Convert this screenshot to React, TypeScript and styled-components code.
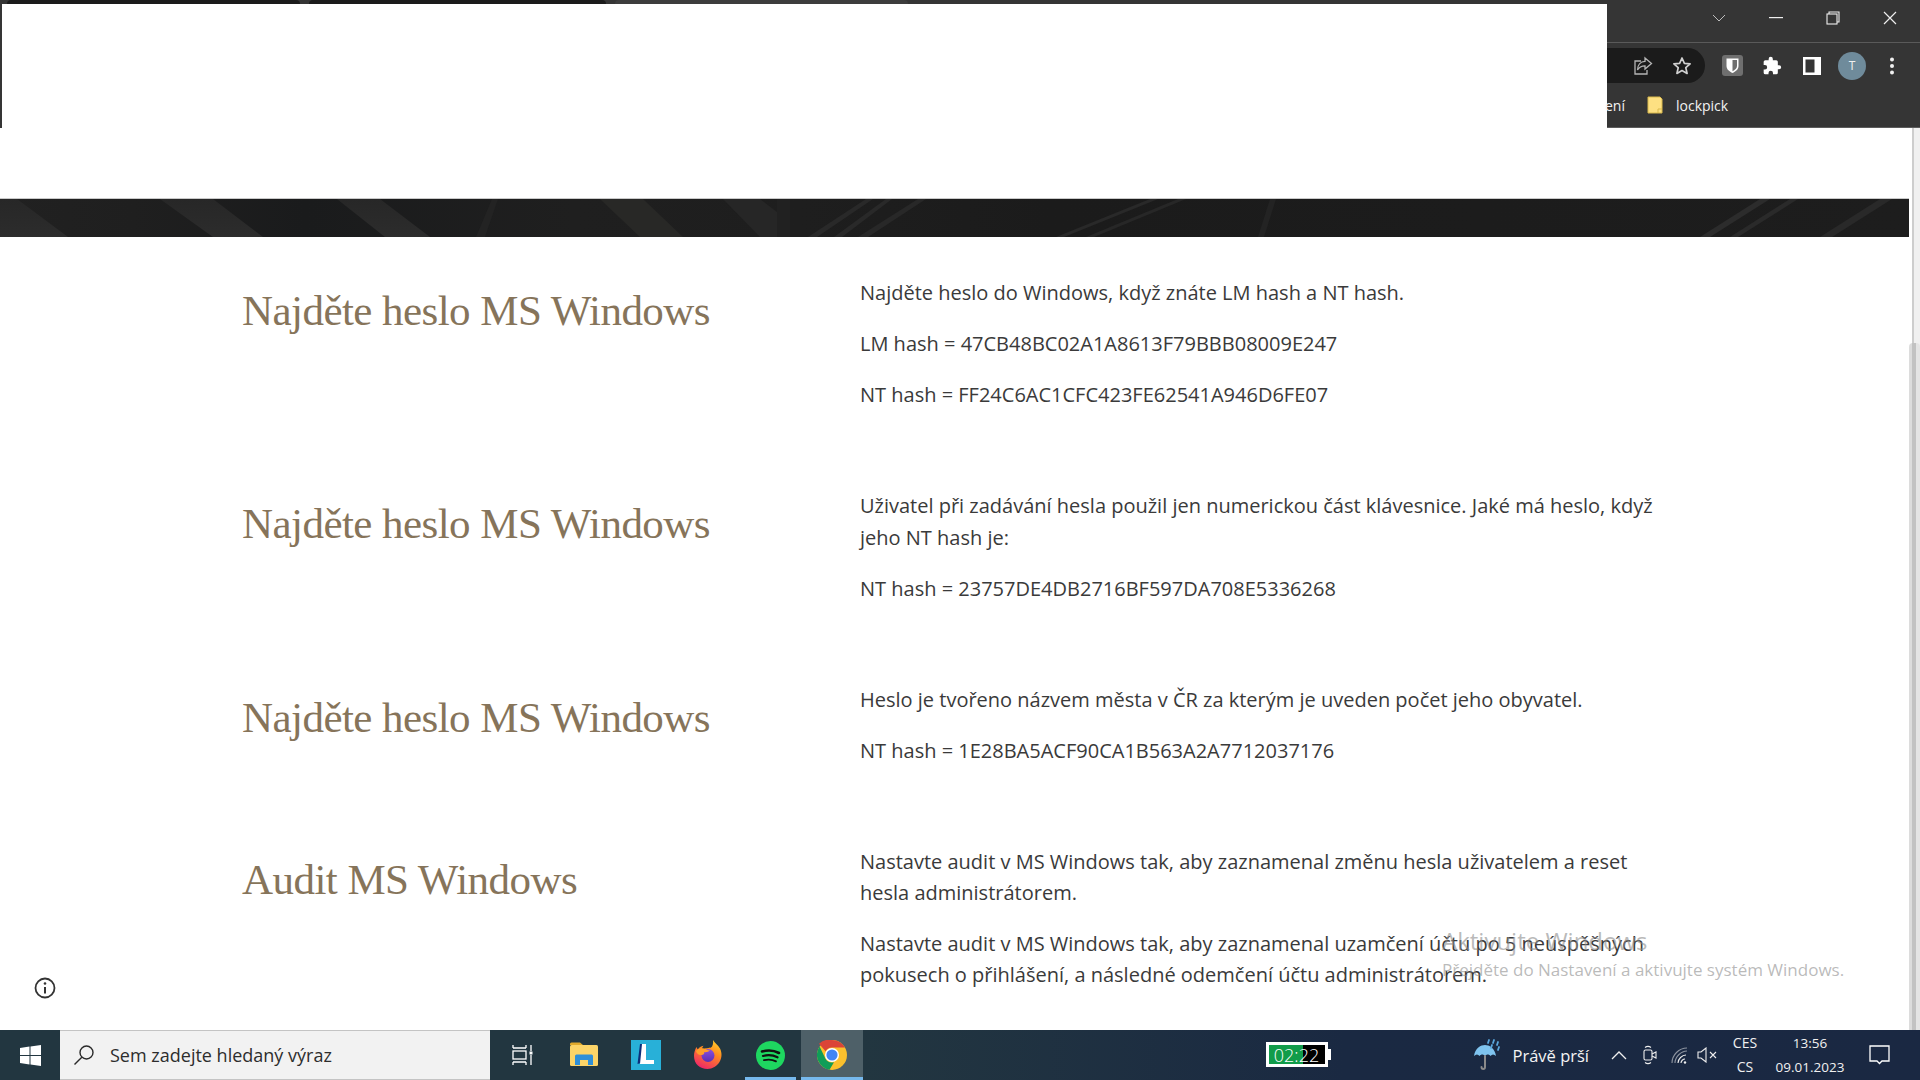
import React from 'react';
import styled, { createGlobalStyle } from 'styled-components';

const Global = createGlobalStyle`
  html, body { margin: 0; padding: 0; width: 1920px; height: 1080px; overflow: hidden; background: #fff; }
  #root { width: 1920px; height: 1080px; }
  * { box-sizing: border-box; }
`;

const Screen = styled.div`
  position: relative;
  width: 1920px; height: 1080px;
  display: flex; flex-direction: column;
  overflow: hidden;
  font-family: "Open Sans", sans-serif;
`;

/* ---------- browser frame ---------- */
const BrowserFrame = styled.header`
  height: 128px; flex: none;
  background: #353535;
  display: flex; flex-direction: column;
`;
const TabEdge = styled.div`
  height: 4px; flex: none; display: flex; padding-left: 7px; gap: 6px;
`;
const TabSliver = styled.div<{ $w: number; $active?: boolean }>`
  width: ${p => p.$w}px;
  background: ${p => (p.$active ? '#3d3d3d' : '#1b1b1b')};
  border-radius: 4px 4px 0 0;
  margin-right: 3px;
`;
const FrameBody = styled.div`
  flex: 1; display: flex; padding-left: 2px; min-height: 0;
`;
const Redaction = styled.div`
  width: 1605px; background: #fff; flex: none;
`;
const ChromeSide = styled.div`
  flex: 1; display: flex; flex-direction: column; min-width: 0;
  border-bottom: 1px solid #5c5c5c;
`;
const WindowRow = styled.div`
  height: 39px; flex: none; display: flex; align-items: center;
  border-bottom: 1px solid #5a5a5a;
  padding: 0 0 11px 102px; gap: 37px;
  color: #e8e8e8;
`;
const WinButton = styled.span`
  width: 20px; height: 20px; display: flex; align-items: center; justify-content: center;
`;
const ToolRow = styled.div`
  height: 45px; flex: none; display: flex; align-items: center;
`;
const Omnibox = styled.div`
  width: 98px; height: 35px; background: #1b1b1b; border-radius: 0 18px 18px 0;
  display: flex; align-items: center; padding-left: 26px; gap: 19px; flex: none;
`;
const ToolIcons = styled.div`
  display: flex; align-items: center; margin-left: 7px;
`;
const ToolSlot = styled.span`
  width: 40px; height: 32px; display: flex; align-items: center; justify-content: center;
`;
const Avatar = styled.span`
  width: 28px; height: 28px; border-radius: 50%; background: #6f8b9b; color: #f0f0f0;
  font-size: 12px; display: flex; align-items: center; justify-content: center;
`;
const BookmarkRow = styled.div`
  flex: 1; display: flex; align-items: center; color: #f2f2f2; font-size: 14px; padding-bottom: 5px;
`;
const BookmarkCut = styled.span` width: 40px; flex: none; margin-left: -2px; `;
const Bookmark = styled.span`
  display: flex; align-items: center; gap: 13px; margin-left: 2px;
`;

/* ---------- page ---------- */
const Viewport = styled.div`
  flex: 1; display: flex; min-height: 0; position: relative;
`;
const Page = styled.main`
  flex: 1; min-width: 0; padding-top: 70px; background: #fff;
`;
const Banner = styled.div`
  height: 39px; background: #1e1e1e; border-top: 1px solid #c9c9c9; overflow: hidden;
  svg { display: block; }
`;
const Content = styled.div`
  padding: 40px 0 0 242px; display: flex; flex-direction: column; gap: 79.7px;
`;
const Section = styled.section`
  display: grid; grid-template-columns: 618px 802px;
`;
const Heading = styled.h2`
  margin: 0; font-family: "Liberation Serif", serif; font-weight: 400;
  font-size: 43px; line-height: 68px; color: #86745a; letter-spacing: -0.55px;
`;
const Body = styled.div`
  display: flex; flex-direction: column; gap: 20px;
`;
const Para = styled.p`
  margin: 0; font-size: 20px; line-height: 31.2px; color: #3a3a3a;
`;
const Scrollbar = styled.div`
  width: 11px; flex: none; background: linear-gradient(90deg, #fff 0 3px, #cdcdcd 3px 5px, #f0f0f0 5px);
  padding-top: 215px;
`;
const ScrollThumb = styled.div`
  height: 100%; border-radius: 4px 4px 0 0;
  background: linear-gradient(90deg, #dcdcdc 0 3px, #c2c2c2 3px 7px, #e4e4e4 7px);
`;
const InfoButton = styled.span`
  position: absolute; left: 34px; top: 849px; width: 22px; height: 22px; display: flex;
`;
const Watermark = styled.div`
  position: absolute; left: 1442px; top: 795px; color: rgba(140,140,140,.6);
  pointer-events: none;
`;
const WatermarkTitle = styled.div` font-size: 24px; line-height: 35px; `;
const WatermarkSub = styled.div` font-size: 17px; line-height: 24px; `;

/* ---------- taskbar ---------- */
const Taskbar = styled.footer`
  height: 50px; flex: none; display: flex; align-items: stretch;
  background: linear-gradient(90deg, #223640 0%, #223640 45%, #1a2942 70%, #1a2842 100%);
`;
const StartButton = styled.div`
  width: 60px; display: flex; align-items: center; justify-content: center; flex: none;
`;
const SearchBox = styled.div`
  width: 430px; flex: none; background: #f2f2f2; border: 1px solid #c4c4c4; border-width: 1px 0 1px 0;
  display: flex; align-items: center; padding-left: 13px; gap: 15px; font-size: 18px; color: #2d2d2d;
`;
const TaskList = styled.div`
  display: flex; padding-left: 1px; flex: none;
`;
const TaskIcon = styled.div<{ $open?: boolean; $active?: boolean }>`
  position: relative; width: 62px; flex: none; display: flex; align-items: center; justify-content: center;
  background: ${p => (p.$active ? '#4e6068' : 'transparent')};
  &::after {
    content: ""; position: absolute; bottom: 0; height: 3px;
    left: ${p => (p.$active ? 0 : 6)}px; right: ${p => (p.$active ? 0 : 5)}px;
    background: ${p => (p.$open ? '#76b9ed' : 'transparent')};
  }
`;
const Spacer = styled.div` flex: 1; `;
const Timer = styled.div`
  position: relative; width: 62px; height: 25px; border: 3px solid #fff; flex: none; margin: 12px 0 0 0;
  background: linear-gradient(90deg, #119c4a 0 60%, #000 60% 100%);
  color: #fff; font-size: 18px; display: flex; align-items: center; justify-content: center;
  line-height: 1; font-weight: 300;
  &::after { content: ""; position: absolute; right: -6px; top: 4px; width: 3px; height: 11px; background: #fff; }
`;
const Weather = styled.div`
  display: flex; align-items: center; gap: 10px; margin-left: 145px; color: #f4f4f4; font-size: 16.5px; flex: none;
`;
const Tray = styled.div`
  display: flex; align-items: center; margin-left: 22px; flex: none;
`;
const TraySlot = styled.span<{ $gap?: number }>`
  display: flex; margin-right: ${p => p.$gap ?? 0}px;
`;
const LangStack = styled.div`
  display: flex; flex-direction: column; align-items: center; justify-content: center; color: #f0f0f0; font-size: 14px; line-height: 24px; margin-left: 8px; width: 40px; flex: none;
`;
const ClockStack = styled(LangStack)`
  margin-left: 7px; width: 76px; font-size: 13.5px;
`;
const NotifySlot = styled.div`
  width: 72px; display: flex; align-items: center; padding-left: 21px; flex: none;
`;

const sections = [
  { title: 'Najděte heslo MS Windows', lines: ['Najděte heslo do Windows, když znáte LM hash a NT hash.', 'LM hash = 47CB48BC02A1A8613F79BBB08009E247', 'NT hash = FF24C6AC1CFC423FE62541A946D6FE07'] },
  { title: 'Najděte heslo MS Windows', lines: ['Uživatel při zadávání hesla použil jen numerickou část klávesnice. Jaké má heslo, když jeho NT hash je:', 'NT hash = 23757DE4DB2716BF597DA708E5336268'] },
  { title: 'Najděte heslo MS Windows', lines: ['Heslo je tvořeno názvem města v ČR za kterým je uveden počet jeho obyvatel.', 'NT hash = 1E28BA5ACF90CA1B563A2A7712037176'] },
  { title: 'Audit MS Windows', lines: ['Nastavte audit v MS Windows tak, aby zaznamenal změnu hesla uživatelem a reset hesla administrátorem.', 'Nastavte audit v MS Windows tak, aby zaznamenal uzamčení účtu po 5 neúspěšných pokusech o přihlášení, a následné odemčení účtu administrátorem.'] },
];

const BannerArt = () => (
  <svg width="1909" height="38" viewBox="0 0 1909 38">
    <defs>
      <linearGradient id="bandA" x1="0" x2="0" y1="0" y2="1"><stop offset="0" stopColor="#272727" /><stop offset="1" stopColor="#2c2c2c" /></linearGradient>
      <linearGradient id="base" x1="0" x2="1" y1="0" y2="0">
        <stop offset="0" stopColor="#212121" />
        <stop offset=".07" stopColor="#1f1f1f" />
        <stop offset=".16" stopColor="#1a1b1c" />
        <stop offset=".3" stopColor="#1f1f1f" />
        <stop offset=".42" stopColor="#1e1e1e" />
        <stop offset=".55" stopColor="#1b1b1b" />
        <stop offset="1" stopColor="#1d1d1d" />
      </linearGradient>
    </defs>
    <rect width="1909" height="38" fill="url(#base)" />
    <polygon points="0,0 17,0 68,38 0,38" fill="url(#bandA)" />
    <polygon points="160,0 213,0 263,38 213,38" fill="url(#bandA)" />
    <polygon points="337,0 380,0 430,38 385,38" fill="url(#bandA)" />
    <polygon points="492,0 498,0 485,38 476,38" fill="#232323" />
    <polygon points="600,0 643,0 683,38 640,38" fill="#282826" />
    <polygon points="723,0 760,0 777,13 777,38 760,38" fill="#262626" />
    <polygon points="777,0 790,0 790,38 777,38" fill="#212121" />
    <polygon points="866,0 873,0 817,38 808,38" fill="#292929" />
    <polygon points="886,0 892,0 842,38 834,38" fill="#292929" />
    <polygon points="918,0 926,0 868,38 858,38" fill="#282828" />
    <polygon points="1270,0 1276,0 1264,38 1258,38" fill="#232323" />
    <polygon points="1150,0 1158,0 1064,38 1056,38" fill="#292929" />
    <polygon points="1178,0 1186,0 1094,38 1086,38" fill="#272727" />
    <polygon points="1700,38 1760,0 1770,0 1710,38" fill="#2c2c2c" />
    <polygon points="1730,38 1790,0 1798,0 1738,38" fill="#2a2a2a" />
    <polygon points="1820,38 1880,0 1892,0 1832,38" fill="#292929" />
  </svg>
);

const ShareIcon = () => (
  <svg width="20" height="20" viewBox="0 0 20 20" fill="none" stroke="#b5b5b5" strokeWidth="1.3"><path d="M8 5H2v13h12v-4" /><path d="M12 2l6.500 5.500L12 13V9.800C8.500 9.800 6 11 4.500 14c0-5 3-8.500 7.500-8.700V2z" /></svg>
);
const StarIcon = () => (
  <svg width="20" height="20" viewBox="0 0 20 20" fill="none" stroke="#d0d0d0" strokeWidth="1.7" strokeLinejoin="round"><path d="M10 2l2.400 5.300 5.700.6-4.300 3.800 1.300 5.700L10 14.500 4.900 17.400l1.300-5.700L1.900 7.900l5.700-.6z" /></svg>
);
const ShieldIcon = () => (
  <svg width="21" height="21" viewBox="0 0 21 21"><rect width="21" height="21" rx="3" fill="#6f6f6f" /><path d="M4.500 3.500h12v7.500c0 3.500-3 5.600-6 7-3-1.400-6-3.500-6-7z" fill="#fff" /><path d="M10.500 5h4.500v6c0 2.400-2.200 4-4.500 5.200z" fill="#6f6f6f" /></svg>
);
const PuzzleIcon = () => (
  <svg width="20" height="20" viewBox="0 0 24 24" fill="#fff"><path d="M20.500 11H19V7a2 2 0 0 0-2-2h-4V3.500a2.500 2.500 0 0 0-5 0V5H4a2 2 0 0 0-2 2v3.800h1.500a2.700 2.700 0 0 1 0 5.400H2V20a2 2 0 0 0 2 2h3.800v-1.500a2.700 2.700 0 0 1 5.400 0V22H17a2 2 0 0 0 2-2v-4h1.500a2.500 2.500 0 0 0 0-5z" /></svg>
);
const PanelIcon = () => (
  <svg width="18" height="18" viewBox="0 0 18 18"><rect width="18" height="18" fill="#fff" /><rect x="2.500" y="2.500" width="9" height="13" fill="#353535" /></svg>
);
const DotsIcon = () => (
  <svg width="6" height="18" viewBox="0 0 6 18" fill="#f0f0f0"><circle cx="3" cy="2.500" r="2" /><circle cx="3" cy="9" r="2" /><circle cx="3" cy="15.500" r="2" /></svg>
);
const WindowsLogo = () => (
  <svg width="21" height="21" viewBox="0 0 21 21" fill="#fff"><path d="M0 3l9.500-1.400V10H0z" /><path d="M10.500 1.400L21 0v10H10.500z" /><path d="M0 11h9.500v8.400L0 18z" /><path d="M10.500 11H21v10l-10.500-1.500z" /></svg>
);
const SearchGlass = () => (
  <svg width="22" height="22" viewBox="0 0 22 22" fill="none" stroke="#2a2a2a" strokeWidth="1.4"><circle cx="13.500" cy="8.500" r="6.500" /><path d="M8.800 13.200L1.500 20.500" /></svg>
);
const TaskView = () => (
  <svg width="21" height="20" viewBox="0 0 21 20" fill="none" stroke="#fff" strokeWidth="1.3"><path d="M1 3h13M1 0v3M14 0v3" /><rect x="1" y="6" width="13" height="8" /><path d="M1 17h13M1 17v3M14 17v3" /><path d="M19 0v6M19 10v10" /><rect x="17.500" y="6.500" width="3" height="3" fill="#fff" stroke="none" /></svg>
);
const FolderIcon = () => (
  <svg width="28" height="26" viewBox="0 0 28 26"><path d="M0 2a1.500 1.500 0 0 1 1.500-1.500H10L13 3h-13z" fill="#e0a92c" /><rect y="3" width="28" height="21" rx="1.500" fill="#fcd468" /><path d="M5 23V14a1.500 1.500 0 0 1 1.500-1.500h15A1.500 1.500 0 0 1 23 14v9h-5v-5h-8v5z" fill="#2f8fd8" /></svg>
);
const LLogo = () => (
  <svg width="30" height="30" viewBox="0 0 30 30"><rect width="30" height="30" fill="#28b0d8" /><path d="M9 4h4.500L10 23l-3.500 1z" fill="#0c2f7a" /><path d="M11 4h4v16h8v4H9z" fill="#fff" /></svg>
);
const FirefoxIcon = () => (
  <svg width="30" height="30" viewBox="0 0 30 30">
    <defs>
      <linearGradient id="ff" x1="0.8" x2="0.3" y1="0" y2="1"><stop offset="0" stopColor="#ffd02a" /><stop offset=".4" stopColor="#ff8a1f" /><stop offset="1" stopColor="#f0246a" /></linearGradient>
      <linearGradient id="fp" x1="0.5" x2="0.5" y1="0" y2="1"><stop offset="0" stopColor="#8a4fe0" /><stop offset="1" stopColor="#5b2fb4" /></linearGradient>
    </defs>
    <path d="M20 0c1.500 3 5 5 7 8.500 2 4 2.200 9-.5 13.500-2.500 4-7 7-12 7C7 29 1 24 1 16c0-3.500 1-6.500 2.500-9C4 8 4.300 9 5 9.500 6 7.500 8 6 10.500 5.800 9 7.500 9 8.500 9.500 9.500c2-1.500 7-1.500 8.500-2C19.500 6.500 20.500 3.500 20 0z" fill="url(#ff)" />
    <circle cx="15" cy="15.500" r="6.500" fill="url(#fp)" />
    <path d="M3 11c2-2.500 5-3 8-2.500 2.500.5 3.500 2 6 2-2 1.500-4 2-6 1.500 1 1.500-.5 3-3 3C5 15 3.500 13 3 11z" fill="#ff9d2a" />
  </svg>
);
const SpotifyIcon = () => (
  <svg width="29" height="29" viewBox="0 0 29 29" fill="none"><circle cx="14.500" cy="14.500" r="14.500" fill="#1ed760" /><path d="M6 10.500c6-1.700 12-1.200 17 1.500" stroke="#111" strokeWidth="2.600" strokeLinecap="round" /><path d="M7 15c5-1.400 10-1 14.500 1.300" stroke="#111" strokeWidth="2.200" strokeLinecap="round" /><path d="M8 19.200c4.500-1 8.500-.7 12 1.200" stroke="#111" strokeWidth="1.800" strokeLinecap="round" /></svg>
);
const ChromeIcon = () => (
  <svg width="30" height="30" viewBox="0 0 30 30">
    <circle cx="15" cy="15" r="15" fill="#fbc02d" />
    <path d="M15 0a15 15 0 0 1 13 7.500H15a7.500 7.500 0 0 0-6.500 3.800L2 3.800A15 15 0 0 1 15 0z" fill="#db4437" />
    <path d="M2.600 6.500L8.500 18.800A7.500 7.500 0 0 0 17 22.200L12.500 29.800A15 15 0 0 1 2.600 6.500z" fill="#0f9d58" />
    <circle cx="15" cy="15" r="7" fill="#fff" />
    <circle cx="15" cy="15" r="5.600" fill="#4285f4" />
  </svg>
);
const Umbrella = () => (
  <svg width="30" height="32" viewBox="0 0 30 32">
    <path d="M1 17C2 9 8 6 12 6s10 3 11 11c-2-2-4-2-5.500 0-1.500-2-4-2-5.500 0-1.500-2-4-2-5.500 0C5 15 3 15 1 17z" fill="#7fc4ef" />
    <path d="M12 17v11c0 2.500-3.500 2.500-3.500 0" fill="none" stroke="#8a8a8a" strokeWidth="2" strokeLinecap="round" />
    <path d="M16 1l-1 3M21 1l-1 3M25 3l-1 3M19 6l-1 3M26 8l-1 3" stroke="#5aa6dc" strokeWidth="1.800" strokeLinecap="round" />
  </svg>
);
const ChevronUp = () => (
  <svg width="16" height="10" viewBox="0 0 16 10" fill="none" stroke="#f0f0f0" strokeWidth="1.300"><path d="M1 9l7-7 7 7" /></svg>
);
const MeetIcon = () => (
  <svg width="14" height="20" viewBox="0 0 14 20" fill="none" stroke="#eee" strokeWidth="1.100"><rect x="1" y="5" width="8" height="10" rx="1.500" /><path d="M9 9l4-2v6l-4-2" /><path d="M2 2.500c2-1.500 4-1.500 6 0M2 17.500c2 1.500 4 1.500 6 0" /></svg>
);
const WifiIcon = () => (
  <svg width="17" height="17" viewBox="0 0 17 17" fill="none" stroke="#eee" strokeWidth="1.100"><path d="M1 16C1 8 8 1 16 1M4 16C4 10 10 4 16 4" opacity=".55" /><path d="M7 16c0-4 4-8 8-8M10 16c0-2 2-4 4-4" /><circle cx="14" cy="15.500" r="1.200" fill="#eee" stroke="none" /></svg>
);
const MuteIcon = () => (
  <svg width="20" height="16" viewBox="0 0 20 16" fill="none" stroke="#eee" strokeWidth="1.100"><path d="M1 5h3l5-4v14l-5-4H1z" /><path d="M13 5l6 6M19 5l-6 6" /></svg>
);
const NotifyIcon = () => (
  <svg width="21" height="20" viewBox="0 0 21 20" fill="none" stroke="#fff" strokeWidth="1.300"><path d="M1 1h19v15h-7l-2.500 2.500L8 16H1z" /></svg>
);
const InfoIcon = () => (
  <svg width="22" height="22" viewBox="0 0 22 22" fill="none" stroke="#333" strokeWidth="1.800"><circle cx="11" cy="11" r="9.500" /><path d="M11 10v6.500" strokeWidth="2" /><circle cx="11" cy="6.500" r="1.300" fill="#333" stroke="none" /></svg>
);
const BookmarkFolder = () => (
  <svg width="16" height="18" viewBox="0 0 16 18"><path d="M1 1h12l2 2v14H1z" fill="#fde082" stroke="#d9b94c" /><path d="M11 17v-4h4" fill="none" stroke="#d9b94c" /></svg>
);

export default function App() {
  return (
    <Screen>
      <Global />
      <BrowserFrame>
        <TabEdge>
          <TabSliver $w={293} />
          <TabSliver $w={297} />
          <TabSliver $w={293} $active />
        </TabEdge>
        <FrameBody>
          <Redaction />
          <ChromeSide>
            <WindowRow>
              <WinButton>
                <svg width="14" height="8" viewBox="0 0 14 8" fill="none" stroke="#bdbdbd" strokeWidth="1"><path d="M1 1l6 6 6-6" /></svg>
              </WinButton>
              <WinButton>
                <svg width="14" height="2" viewBox="0 0 14 2"><rect width="14" height="1.200" fill="#eee" /></svg>
              </WinButton>
              <WinButton>
                <svg width="14" height="14" viewBox="0 0 14 14" fill="none" stroke="#eee" strokeWidth="1.100"><rect x="1" y="3" width="10" height="10" /><path d="M3 3V1h10v10h-2" /></svg>
              </WinButton>
              <WinButton>
                <svg width="14" height="14" viewBox="0 0 14 14" fill="none" stroke="#eee" strokeWidth="1.200"><path d="M1 1l12 12M13 1L1 13" /></svg>
              </WinButton>
            </WindowRow>
            <ToolRow>
              <Omnibox>
                <ShareIcon />
                <StarIcon />
              </Omnibox>
              <ToolIcons>
                <ToolSlot><ShieldIcon /></ToolSlot>
                <ToolSlot><PuzzleIcon /></ToolSlot>
                <ToolSlot><PanelIcon /></ToolSlot>
                <ToolSlot><Avatar>T</Avatar></ToolSlot>
                <ToolSlot><DotsIcon /></ToolSlot>
              </ToolIcons>
            </ToolRow>
            <BookmarkRow>
              <BookmarkCut>ení</BookmarkCut>
              <Bookmark><BookmarkFolder />lockpick</Bookmark>
            </BookmarkRow>
          </ChromeSide>
        </FrameBody>
      </BrowserFrame>
      <Viewport>
        <Page>
          <Banner><BannerArt /></Banner>
          <Content>
            {sections.map((s, i) => (
              <Section key={i}>
                <Heading>{s.title}</Heading>
                <Body>
                  {s.lines.map((l, j) => <Para key={j}>{l}</Para>)}
                </Body>
              </Section>
            ))}
          </Content>
        </Page>
        <Scrollbar><ScrollThumb /></Scrollbar>
        <InfoButton><InfoIcon /></InfoButton>
        <Watermark>
          <WatermarkTitle>Aktivujte Windows</WatermarkTitle>
          <WatermarkSub>Přejděte do Nastavení a aktivujte systém Windows.</WatermarkSub>
        </Watermark>
      </Viewport>
      <Taskbar>
        <StartButton><WindowsLogo /></StartButton>
        <SearchBox><SearchGlass />Sem zadejte hledaný výraz</SearchBox>
        <TaskList>
          <TaskIcon><TaskView /></TaskIcon>
          <TaskIcon><FolderIcon /></TaskIcon>
          <TaskIcon><LLogo /></TaskIcon>
          <TaskIcon><FirefoxIcon /></TaskIcon>
          <TaskIcon $open><SpotifyIcon /></TaskIcon>
          <TaskIcon $open $active><ChromeIcon /></TaskIcon>
        </TaskList>
        <Spacer />
        <Timer>02:22</Timer>
        <Weather><Umbrella />Právě prší</Weather>
        <Tray>
          <TraySlot $gap={16}><ChevronUp /></TraySlot>
          <TraySlot $gap={14}><MeetIcon /></TraySlot>
          <TraySlot $gap={9}><WifiIcon /></TraySlot>
          <TraySlot><MuteIcon /></TraySlot>
        </Tray>
        <LangStack><span>CES</span><span>CS</span></LangStack>
        <ClockStack><span>13:56</span><span>09.01.2023</span></ClockStack>
        <NotifySlot><NotifyIcon /></NotifySlot>
      </Taskbar>
    </Screen>
  );
}
